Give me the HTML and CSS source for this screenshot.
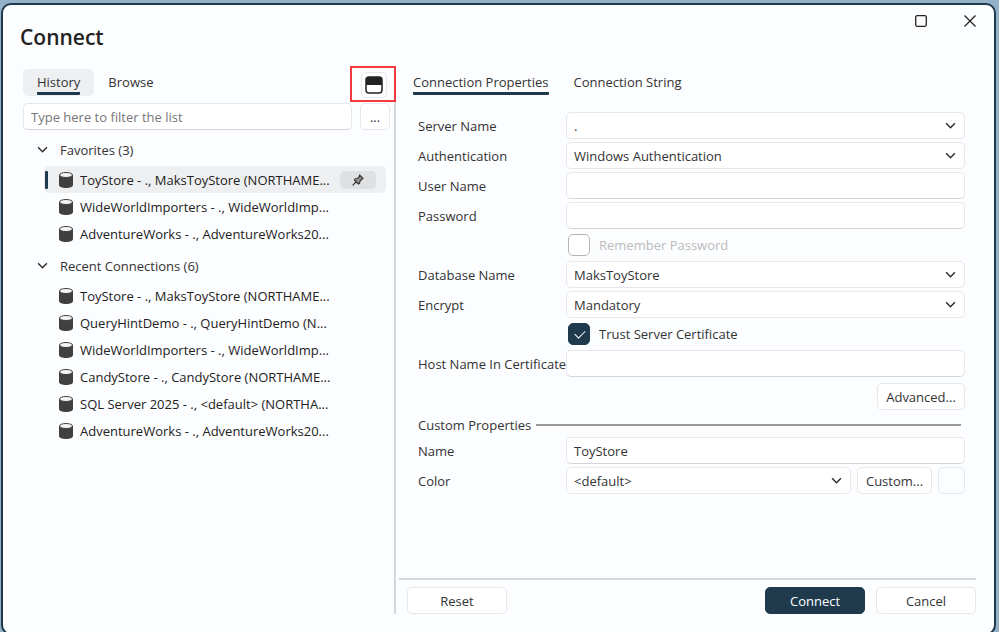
FILE: index.html
```html
<!DOCTYPE html>
<html lang="en">
<head>
    <meta charset="UTF-8">
    <meta name="viewport" content="width=device-width, initial-scale=1.0">
    <title>Connect</title>
    <link rel="stylesheet" href="styles.css">
</head>
<body>

<!-- Shared icons -->
<svg class="sprite" aria-hidden="true">
    <symbol id="icon-db" viewBox="0 0 14 16">
        <path d="M0 3v10c0 1.700 3.100 3 7 3s7-1.300 7-3V3z" fill="#404040"/>
        <ellipse cx="7" cy="3" rx="6.500" ry="2.500" fill="#f4f4f5" stroke="#404040"/>
    </symbol>
    <symbol id="icon-chevron" viewBox="0 0 10 10">
        <path d="M1 3l4 4 4-4" fill="none" stroke="#2b2b2b" stroke-width="1.300"/>
    </symbol>
</svg>

<main class="window">
    <header class="titlebar">
        <h1>Connect</h1>
        <div class="window-buttons">
            <button type="button" aria-label="Maximize">
                <svg width="12" height="12" viewBox="0 0 12 12"><rect x="0.700" y="0.700" width="10.600" height="10.600" rx="1.500" fill="none" stroke="#222" stroke-width="1.300"/></svg>
            </button>
            <button type="button" aria-label="Close">
                <svg width="12" height="12" viewBox="0 0 12 12"><path d="M0.500 0.500l11 11M11.500 0.500l-11 11" stroke="#222" stroke-width="1.300"/></svg>
            </button>
        </div>
    </header>

    <div class="panes">
        <!-- Saved connections -->
        <section class="history">
            <div class="history-tabs">
                <button type="button" class="tab tab-filled active"><span>History</span></button>
                <button type="button" class="tab"><span>Browse</span></button>
                <div class="layout-toggle">
                    <button type="button" class="button" aria-label="Toggle layout">
                        <svg width="18" height="18" viewBox="0 0 18 18">
                            <rect x="1" y="1" width="16" height="16" rx="3" fill="#fff" stroke="#222" stroke-width="1.500"/>
                            <path d="M1 9V4a3 3 0 0 1 3-3h10a3 3 0 0 1 3 3v5z" fill="#222"/>
                        </svg>
                    </button>
                </div>
            </div>

            <div class="filter">
                <input type="text" class="field" placeholder="Type here to filter the list" aria-label="Filter">
                <button type="button" class="button">...</button>
            </div>

            <h2><svg class="chevron"><use href="#icon-chevron"/></svg>Favorites (3)</h2>
            <ul>
                <li class="selected">
                    <svg class="db"><use href="#icon-db"/></svg><span>ToyStore - ., MaksToyStore (NORTHAME...</span>
                    <button type="button" class="pin" aria-label="Unpin">
                        <svg width="12" height="12" viewBox="0 0 12 12"><path d="M7.500 1l3.500 3.500-1 .5-2 2-.5 2.500-1 .5-4-4 .5-1L5.500 4.500l2-2zM4 8L.7 11.300" fill="#999" stroke="#333" stroke-width="1.200" stroke-linejoin="round"/></svg>
                    </button>
                </li>
                <li><svg class="db"><use href="#icon-db"/></svg><span>WideWorldImporters - ., WideWorldImp...</span></li>
                <li><svg class="db"><use href="#icon-db"/></svg><span>AdventureWorks - ., AdventureWorks20...</span></li>
            </ul>

            <h2><svg class="chevron"><use href="#icon-chevron"/></svg>Recent Connections (6)</h2>
            <ul>
                <li><svg class="db"><use href="#icon-db"/></svg><span>ToyStore - ., MaksToyStore (NORTHAME...</span></li>
                <li><svg class="db"><use href="#icon-db"/></svg><span>QueryHintDemo - ., QueryHintDemo (N...</span></li>
                <li><svg class="db"><use href="#icon-db"/></svg><span>WideWorldImporters - ., WideWorldImp...</span></li>
                <li><svg class="db"><use href="#icon-db"/></svg><span>CandyStore - ., CandyStore (NORTHAME...</span></li>
                <li><svg class="db"><use href="#icon-db"/></svg><span>SQL Server 2025 - ., &lt;default&gt; (NORTHA...</span></li>
                <li><svg class="db"><use href="#icon-db"/></svg><span>AdventureWorks - ., AdventureWorks20...</span></li>
            </ul>
        </section>

        <!-- Connection details -->
        <form class="details">
            <div class="details-tabs">
                <button type="button" class="tab active"><span>Connection Properties</span></button>
                <button type="button" class="tab"><span>Connection String</span></button>
            </div>

            <div class="form-grid">
                <label for="server">Server Name</label>
                <div class="select">
                    <select id="server" class="field"><option>.</option></select>
                    <svg class="chevron"><use href="#icon-chevron"/></svg>
                </div>

                <label for="auth">Authentication</label>
                <div class="select">
                    <select id="auth" class="field"><option>Windows Authentication</option></select>
                    <svg class="chevron"><use href="#icon-chevron"/></svg>
                </div>

                <label for="user">User Name</label>
                <input id="user" type="text" class="field">

                <label for="password">Password</label>
                <input id="password" type="password" class="field">

                <div class="check">
                    <input id="remember" type="checkbox" disabled>
                    <label for="remember">Remember Password</label>
                </div>

                <label for="database">Database Name</label>
                <div class="select">
                    <select id="database" class="field"><option>MaksToyStore</option></select>
                    <svg class="chevron"><use href="#icon-chevron"/></svg>
                </div>

                <label for="encrypt">Encrypt</label>
                <div class="select">
                    <select id="encrypt" class="field"><option>Mandatory</option></select>
                    <svg class="chevron"><use href="#icon-chevron"/></svg>
                </div>

                <div class="check">
                    <input id="trust" type="checkbox" checked>
                    <label for="trust">Trust Server Certificate</label>
                </div>

                <label for="host">Host Name In Certificate</label>
                <input id="host" type="text" class="field">

                <button type="button" class="button advanced">Advanced...</button>
            </div>

            <h3>Custom Properties</h3>
            <div class="form-grid">
                <label for="name">Name</label>
                <input id="name" type="text" class="field" value="ToyStore">

                <label for="color">Color</label>
                <div class="color-row">
                    <div class="select">
                        <select id="color" class="field"><option>&lt;default&gt;</option></select>
                        <svg class="chevron"><use href="#icon-chevron"/></svg>
                    </div>
                    <button type="button" class="button custom">Custom...</button>
                    <button type="button" class="button swatch" aria-label="Selected color"></button>
                </div>
            </div>

            <footer>
                <button type="reset" class="button">Reset</button>
                <button type="submit" class="button primary">Connect</button>
                <button type="button" class="button">Cancel</button>
            </footer>
        </form>
    </div>
</main>

</body>
</html>
```
FILE: styles.css
```css
* {
    box-sizing: border-box;
}
body {
    margin: 0;
    padding: 3px 3px 0 1px;
    height: 100vh;
    overflow: hidden;
    background-color: #93b1c8;
    font-family: "Open Sans", "Noto Sans", sans-serif;
    font-size: 13px;
    line-height: 18px;
    color: #333;
}
button, input, select {
    font: inherit;
    color: inherit;
}
h1, h2, h3, ul {
    margin: 0;
    padding: 0;
}
.sprite {
    position: absolute;
    width: 0;
    height: 0;
}
.window {
    display: flex;
    flex-direction: column;
    height: 100vh;
    border: 2px solid #1f3a4d;
    border-radius: 10px;
    background-color: #fcfdff;
}

/* Title bar */
.titlebar {
    display: flex;
    justify-content: space-between;
    height: 64px;
    padding: 4px 12px 0 17px;
}
h1 {
    padding-top: 14px;
    font-size: 21px;
    font-weight: 600;
    line-height: 28px;
    color: #222;
}
.window-buttons {
    display: flex;
    gap: 24px;
}
.window-buttons button {
    display: flex;
    align-items: center;
    justify-content: center;
    width: 25px;
    height: 24px;
    padding: 0;
    border: none;
    background: none;
}

.panes {
    display: grid;
    grid-template-columns: minmax(300px, 393px) 1fr;
    flex: 1;
    padding-bottom: 19px;
}

/* Shared controls */
.tab {
    height: 27px;
    padding: 0 14px;
    border: none;
    border-radius: 5px;
    background: none;
}
.tab span {
    display: block;
    height: 25px;
    line-height: 25px;
}
.tab.active span {
    border-bottom: 3px solid #1f3a4d;
    border-radius: 1px;
}
.tab-filled {
    background-color: #eeeff1;
}
.field {
    width: 100%;
    height: 27px;
    padding: 0 7px;
    border: 1px solid #e6e7ea;
    border-radius: 5px;
    background-color: #fff;
}
input.field {
    border-bottom-color: #d4d5d8;
}
input::placeholder {
    color: #777;
    opacity: 1;
}
.button {
    height: 27px;
    padding: 0;
    border: 1px solid #e6e7ea;
    border-radius: 5px;
    background-color: #fff;
}
.select {
    position: relative;
    flex: 1;
}
.select select {
    display: block;
    appearance: none;
}
.select .chevron {
    position: absolute;
    top: 8px;
    right: 9px;
    pointer-events: none;
}
.chevron {
    width: 11px;
    height: 11px;
}

/* Saved connections */
.history {
    padding-left: 20px;
    border-right: 2px solid #d5d6de;
}
.history-tabs {
    position: relative;
    display: flex;
}
/* Highlight frame, lies over the divider */
.layout-toggle {
    position: absolute;
    top: -3px;
    right: -2px;
    display: flex;
    align-items: center;
    justify-content: center;
    width: 46px;
    height: 36px;
    padding: 1px 0 0 2px;
    border: 2px solid #f03a3e;
    background-color: #fcfdff;
}
.layout-toggle .button {
    display: flex;
    align-items: center;
    justify-content: center;
    width: 26px;
    height: 26px;
}
.filter {
    display: flex;
    gap: 8px;
    padding: 7px 4px 0 0;
}
.filter .button {
    flex: 0 0 30px;
}
h2 {
    display: flex;
    align-items: center;
    gap: 12px;
    height: 27px;
    margin: 6px 0 3px;
    padding-left: 14px;
    font-size: 13px;
    font-weight: 400;
}
ul + h2 {
    margin-top: 5px;
}
ul {
    padding: 0 8px 0 21px;
    list-style: none;
}
li {
    position: relative;
    display: flex;
    align-items: center;
    gap: 7px;
    height: 27px;
    padding: 0 10px 0 15px;
    border-radius: 5px;
    color: #222;
    white-space: nowrap;
}
li.selected {
    background-color: #eeeff1;
}
li.selected::before {
    content: "";
    position: absolute;
    top: 5px;
    left: 1px;
    width: 3px;
    height: 18px;
    border-radius: 1px;
    background-color: #1f3a4d;
}
.db {
    flex: none;
    width: 14px;
    height: 16px;
}
.pin {
    display: flex;
    align-items: center;
    justify-content: center;
    width: 36px;
    height: 18px;
    margin-left: auto;
    padding: 0;
    border: none;
    border-radius: 5px;
    background-color: #dfe0e2;
}

/* Connection details */
.details {
    display: flex;
    flex-direction: column;
    padding: 0 18px 0 3px;
}
.details-tabs {
    display: flex;
    margin-bottom: 16px;
}
.details-tabs .tab + .tab {
    padding-left: 11px;
}
.form-grid {
    display: grid;
    grid-template-columns: 148px 1fr;
    row-gap: 3px;
    align-items: center;
    padding: 0 11px 0 19px;
}
.form-grid label {
    white-space: nowrap;
}
.check {
    grid-column: 2;
    display: flex;
    align-items: center;
    gap: 9px;
    height: 26px;
    padding-left: 2px;
}
.check input {
    position: relative;
    appearance: none;
    width: 22px;
    height: 22px;
    margin: 0;
    border: 1px solid #b5b6b8;
    border-radius: 5px;
    background-color: #fff;
}
.check input:checked {
    border-color: #1f3a4d;
    background-color: #1f3a4d;
}
.check input:checked::after {
    content: "";
    position: absolute;
    top: 4px;
    left: 8px;
    width: 5px;
    height: 9px;
    border: solid #fff;
    border-width: 0 1px 1px 0;
    transform: rotate(45deg);
}
.check input:disabled + label {
    color: #bbb;
}
.advanced {
    grid-column: 2;
    justify-self: end;
    width: 88px;
    margin-top: 3px;
}
h3 {
    display: flex;
    align-items: center;
    gap: 5px;
    height: 24px;
    margin-top: 3px;
    padding: 0 15px 0 19px;
    font-size: 13px;
    font-weight: 400;
}
h3::after {
    content: "";
    flex: 1;
    height: 2px;
    background-color: #999;
}
.color-row {
    display: flex;
    gap: 6px;
}
.custom {
    width: 75px;
}
.swatch {
    width: 27px;
    background-color: #fcfdff;
}
footer {
    display: flex;
    gap: 11px;
    margin-top: auto;
    padding: 7px 0 0 8px;
    border-top: 2px solid #d5d6de;
}
footer .button {
    width: 100px;
}
footer .primary {
    margin-left: auto;
    border-color: #1f3a4d;
    background-color: #1f3a4d;
    color: #fff;
}
```
